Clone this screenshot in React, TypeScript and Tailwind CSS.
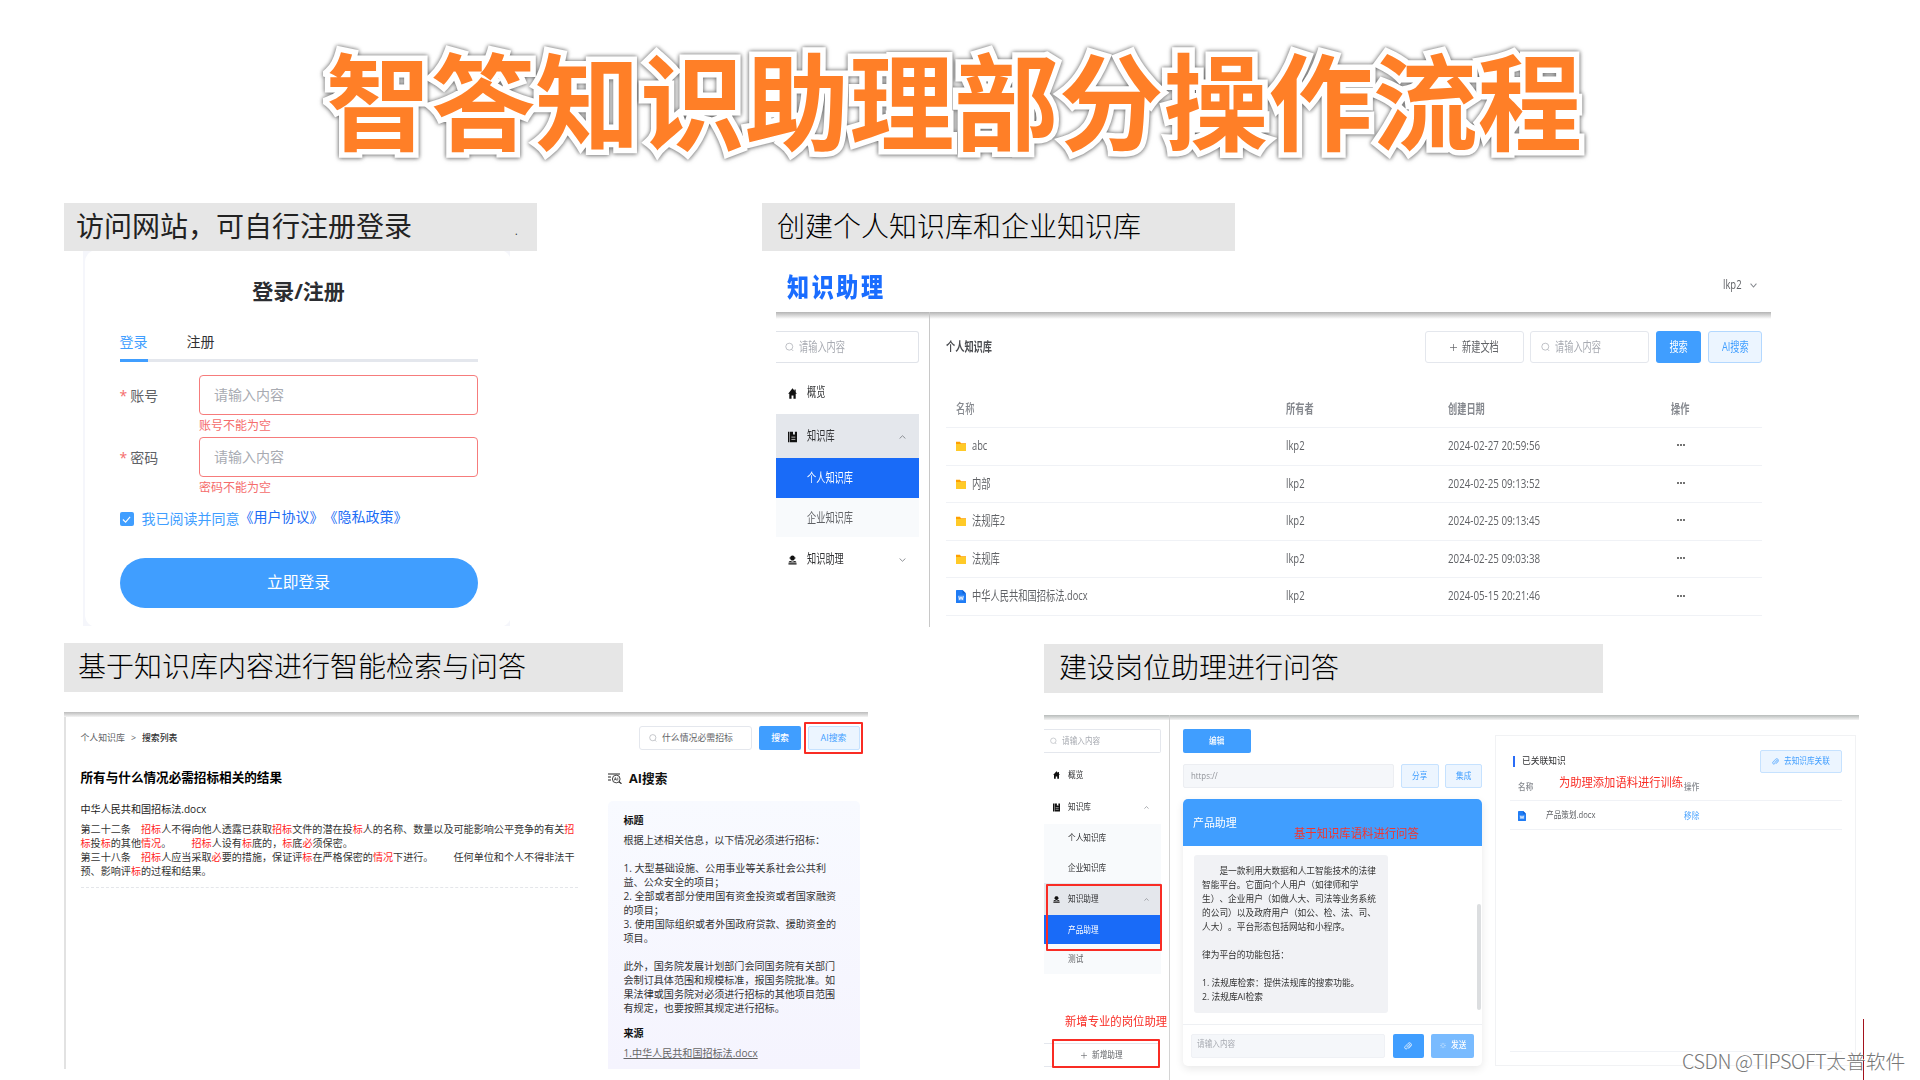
import React from "react";

interface TextProps {
  children: React.ReactNode;
  className?: string;
}

interface FileRow {
  name: string;
  owner: string;
  date: string;
  type: "folder" | "doc";
}

const files: FileRow[] = [
  { name: "abc", owner: "lkp2", date: "2024-02-27 20:59:56", type: "folder" },
  { name: "内部", owner: "lkp2", date: "2024-02-25 09:13:52", type: "folder" },
  { name: "法规库2", owner: "lkp2", date: "2024-02-25 09:13:45", type: "folder" },
  { name: "法规库", owner: "lkp2", date: "2024-02-25 09:03:38", type: "folder" },
  { name: "中华人民共和国招标法.docx", owner: "lkp2", date: "2024-05-15 20:21:46", type: "doc" },
];

// One-line label, usually narrowed with a scale-x class
const T: React.FC<TextProps> = ({ children, className = "" }) => (
  <span className={`inline-block origin-left whitespace-nowrap ${className}`}>{children}</span>
);

const Hl: React.FC<TextProps> = ({ children }) => <span className="text-[#ff2424]">{children}</span>;

const SearchIcon = ({ className = "" }) => (
  <svg viewBox="0 0 16 16" fill="none" stroke="currentColor" strokeWidth="1.3" className={`shrink-0 ${className}`}>
    <circle cx="7.6" cy="7.4" r="6.2" />
    <path d="M11.8 12.2 14.6 15" />
  </svg>
);

const HomeIcon = ({ className = "" }) => (
  <svg viewBox="0 0 16 16" preserveAspectRatio="none" fill="#111" className={`shrink-0 ${className}`}>
    <path d="M8 .5.3 8.2h2V15.500h4v-4.600h3.400v4.600h4V8.200h2l-2-2V2.100h-2.100v1.800z" />
  </svg>
);

const BookIcon = ({ className = "" }) => (
  <svg viewBox="0 0 16 18" preserveAspectRatio="none" className={`shrink-0 ${className}`}>
    <path d="M0 1h2.400v16H0zM3.400 1h5.500v5l1.700-1.400L12.300 6V1H16v16H3.400z" fill="#111" />
    <path d="M6 9.200h7M6 12.600h7" stroke="#fff" strokeWidth="1.100" />
  </svg>
);

const AssistantIcon = ({ className = "" }) => (
  <svg viewBox="0 0 16 18" preserveAspectRatio="none" fill="#111" className={`shrink-0 ${className}`}>
    <path d="M4 4.500C4.300 2 5.800.8 8 .8s3.700 1.200 4 3.700h1.400v1.700H12c-.3 2.300-1.900 3.900-4 3.900S4.300 8.500 4 6.200H2.600V4.500z" />
    <path d="M4 10.600 8 12l4-1.400c1.900.4 2.800 1.300 3 3H1c.2-1.700 1.100-2.600 3-3zM.8 14.700h14.400v2.500H.8z" />
  </svg>
);

const Chevron = ({ up = false, className = "" }) => (
  <svg viewBox="0 0 12 8" preserveAspectRatio="none" fill="none" stroke="#85888e" strokeWidth="1.700" className={`shrink-0 ${className}`}>
    <path d={up ? "M1 7 6 1.500 11 7" : "M1 1 6 6.500 11 1"} />
  </svg>
);

const FolderIcon = () => (
  <svg viewBox="0 0 20 20" preserveAspectRatio="none" className="h-[10px] w-[10px] shrink-0">
    <path d="M0 1.500h8l2 3h10v8H0z" fill="#ffa000" />
    <path d="M0 6h20v14H0z" fill="#ffca28" />
  </svg>
);

const DocIcon = ({ className = "" }) => (
  <svg viewBox="0 0 20 26" preserveAspectRatio="none" className={`shrink-0 ${className}`}>
    <path d="M1 0h12l7 7v18a1 1 0 0 1-1 1H1a1 1 0 0 1-1-1V1a1 1 0 0 1 1-1z" fill="#1f7cf5" />
    <path d="M13 0v7h7z" fill="#0f5fd0" />
    <path d="M4 11h12v10H4z" fill="#fff" fillOpacity=".25" />
    <path d="m5.500 12.500 2 7 2.500-6 2.500 6 2-7" fill="none" stroke="#fff" strokeWidth="1.700" />
  </svg>
);

const ClipIcon = ({ className = "" }) => (
  <svg viewBox="0 0 16 16" fill="none" stroke="currentColor" strokeWidth="1.500" className={`shrink-0 ${className}`}>
    <path d="m5 10.500 5-5.200a1.300 1.300 0 0 1 2 1.800L6.300 13a2.800 2.800 0 0 1-4.200-3.800l6-6.300a3.900 3.900 0 0 1 5.700 5.400l-4.600 5" />
  </svg>
);

const PlusIcon = ({ className = "" }) => (
  <svg viewBox="0 0 10 10" stroke="#606266" strokeWidth="1" className={`shrink-0 ${className}`}>
    <path d="M5 0v10M0 5h10" />
  </svg>
);

const LoaderIcon = ({ className = "" }) => (
  <svg viewBox="0 0 16 16" stroke="currentColor" strokeWidth="1.500" className={`shrink-0 ${className}`}>
    <path d="M8 1v3.500M8 11.500V15M1 8h3.500M11.500 8H15M3 3l2.500 2.500M10.500 10.500 13 13M13 3l-2.500 2.500M5.500 10.500 3 13" />
  </svg>
);

const AiSearchIcon = () => (
  <svg viewBox="0 0 28 22" fill="none" stroke="#222" className="h-[11px] w-[14px] shrink-0">
    <path d="M0 2h24M0 8h6M0 14h6" strokeWidth="2.400" />
    <circle cx="16.500" cy="12" r="7.700" strokeWidth="1.700" />
    <path d="m22 17.500 5 4" strokeWidth="2.200" />
    <path d="m12.500 15 2.300-6 2.300 6M13.500 13h2.800M19.500 9v6" strokeWidth="1.300" />
  </svg>
);

const Login = () => (
  <div className="ml-[19px] h-[375px] w-[427px] overflow-hidden bg-[#f5f6fb]">
    <div className="-mt-px ml-[2px] h-[377px] w-[426px] rounded-[12px] bg-white pl-[34.500px] pt-[30px]">
      <div className="w-[358px]">
        <h2 className="flex h-[24px] items-center justify-center text-[21px] font-bold text-[#2b2d31]">登录/注册</h2>
        <div className="mt-[25px] flex h-[33px] border-b-[3px] border-[#e4e7ed] text-[14px] leading-[26px]">
          <div className="mr-[39px] h-[33px] w-[28px] border-b-[3px] border-[#409eff] text-[#409eff]">登录</div>
          <div className="text-[#303133]">注册</div>
        </div>
        {["账号", "密码"].map((label, i) => (
          <div key={label} className={`flex h-[62px] ${i === 0 ? "mt-[13px]" : ""}`}>
            <div className="flex h-[40px] w-[79.500px] items-center text-[14px] text-[#606266]">
              <span className="mr-[3px] text-[#f56c6c]">*</span>
              {label}
            </div>
            <div className="w-[278.500px]">
              <div className="flex h-[40px] items-center rounded-[4px] border border-[#f67c7c] pb-px pl-[14px] text-[14px] text-[#a8abb2]">
                请输入内容
              </div>
              <div className="flex h-[21px] items-center text-[12px] text-[#f56c6c]">{label}不能为空</div>
            </div>
          </div>
        ))}
        <div className="mt-[12px] flex h-[16px] items-center text-[14px] leading-none">
          <div className="mr-[8px] flex h-[14px] w-[14px] items-center justify-center rounded-[2px] bg-[#409eff]">
            <svg viewBox="0 0 10 10" fill="none" stroke="#fff" strokeWidth="1.200" className="h-[9px] w-[9px]">
              <path d="m1 5 3 3 5-6" />
            </svg>
          </div>
          <span className="text-[#409eff]">我已阅读并同意</span>
          <span className="mb-[4px] text-[#1b6cf5]">《用户协议》《隐私政策》</span>
        </div>
        <button className="mt-[31px] h-[50px] w-full rounded-full bg-[#409eff] text-[15.800px] text-white">立即登录</button>
      </div>
    </div>
  </div>
);

const KnowledgeBase = () => (
  <div className="ml-[14px] w-[995px] text-[12.600px] leading-none text-[#606266]">
    <div className="flex h-[61px] items-center pl-[11px] pt-[11px]">
      <T className="w-[936px] scale-x-[.85] text-[26px] font-black tracking-[3px] text-[#1a6dff]">知识助理</T>
      <T className="w-[27px] scale-x-[.75] pb-[4px]">lkp2</T>
      <Chevron className="mb-[4px] h-[5px] w-[7px]" />
    </div>
    <div className="h-[7px] bg-gradient-to-b from-[#b4b4b4] to-white" />
    <div className="-mt-[7px] flex h-[315px]">
      <div className="w-[154px] border-r border-[#c8c8c8] pt-[19px]">
        <div className="flex h-[32px] w-[143px] items-center rounded-r-[3px] border border-l-0 border-[#e0e3e9] pl-[9px] text-[#a8abb2]">
          <SearchIcon className="mr-[5px] h-[10px] w-[9px]" />
          <T className="scale-x-[.73] pt-px">请输入内容</T>
        </div>
        <div className="flex h-[51px] items-center pl-[12px] pt-[9px] text-[#303133]">
          <HomeIcon className="mr-[10px] h-[11px] w-[9px]" />
          <T className="scale-x-[.73] pb-px">概览</T>
        </div>
        <div className="flex h-[44px] w-[143px] items-center bg-[#e4e7ec] pl-[12px] pt-px text-[#303133]">
          <BookIcon className="mr-[10px] h-[12px] w-[9px]" />
          <T className="w-[92px] scale-x-[.73]">知识库</T>
          <Chevron up className="h-[4px] w-[7px]" />
        </div>
        <div className="flex h-[40px] w-[143px] items-center bg-[#196bf8] pl-[31px] pt-px text-white">
          <T className="scale-x-[.73]">个人知识库</T>
        </div>
        <div className="flex h-[39px] w-[143px] items-center bg-[#f8fafc] pl-[31px] pt-px">
          <T className="scale-x-[.73]">企业知识库</T>
        </div>
        <div className="flex h-[44px] w-[143px] items-center pl-[12px] pt-px text-[#303133]">
          <AssistantIcon className="mr-[10px] h-[10px] w-[9px]" />
          <T className="w-[92px] scale-x-[.73]">知识助理</T>
          <Chevron className="h-[4px] w-[7px]" />
        </div>
      </div>
      <div className="w-[832px] pl-[16px] pt-[19px]">
        <div className="flex h-[32px] items-center">
          <T className="w-[479px] scale-x-[.73] font-bold text-[#4a4c50]">个人知识库</T>
          <div className="mr-[6px] flex h-[32px] w-[99px] shrink-0 items-center rounded-[3px] border border-[#e4e7ed] pl-[24px]">
            <PlusIcon className="mr-[5px] h-[9px] w-[7px]" />
            <T className="scale-x-[.73]">新建文档</T>
          </div>
          <div className="mr-[7px] flex h-[32px] w-[119px] shrink-0 items-center rounded-[3px] border border-[#e4e7ed] pl-[10px] text-[#a8abb2]">
            <SearchIcon className="mr-[5px] h-[10px] w-[9px]" />
            <T className="scale-x-[.73] pt-px">请输入内容</T>
          </div>
          <div className="mr-[7px] flex h-[32px] w-[45px] shrink-0 items-center justify-center rounded-[3px] bg-[#409eff] text-white">
            <T className="!origin-center scale-x-[.73]">搜索</T>
          </div>
          <div className="flex h-[32px] w-[54px] shrink-0 items-center justify-center rounded-[3px] border border-[#b3d8ff] bg-[#ecf5ff] text-[#409eff]">
            <T className="!origin-center scale-x-[.73]">AI搜索</T>
          </div>
        </div>
        <div className="mt-[27px] flex h-[38px] items-center border-b border-[#f0f2f6] pl-[10px] pt-[2px] font-bold text-[#85888e]">
          <T className="w-[330px] scale-x-[.73]">
            <span className="font-medium">名称</span>
          </T>
          <T className="w-[162px] scale-x-[.73]">所有者</T>
          <T className="w-[223px] scale-x-[.73]">创建日期</T>
          <T className="scale-x-[.73]">操作</T>
        </div>
        {files.map((file) => (
          <div key={file.name} className="flex h-[37.600px] items-center border-b border-[#f0f2f6] pl-[10px]">
            <div className="flex w-[330px] shrink-0 items-center">
              {file.type === "folder" ? <FolderIcon /> : <DocIcon className="h-[13px] w-[10px]" />}
              <T className="ml-[6px] scale-x-[.735]">{file.name}</T>
            </div>
            <T className="w-[162px] shrink-0 scale-x-[.75]">{file.owner}</T>
            <T className="w-[229px] shrink-0 scale-x-[.775]">{file.date}</T>
            <div className="flex gap-[1px] pb-[2px]">
              <i className="h-[2px] w-[2px] rounded-full bg-[#444]" />
              <i className="h-[2px] w-[2px] rounded-full bg-[#444]" />
              <i className="h-[2px] w-[2px] rounded-full bg-[#444]" />
            </div>
          </div>
        ))}
      </div>
    </div>
  </div>
);

const SearchResult = () => (
  <div className="mt-[20px] w-[804px] leading-none">
    <div className="h-[5px] bg-gradient-to-b from-[#bcbcbc] to-[#f4f4f4]" />
    <div className="flex h-[352px] border-l-2 border-[#e2e2e2]">
      <div className="w-[512px] pl-[14.500px] pt-[14px]">
        <div className="flex h-[14px] items-center text-[8.900px] text-[#606266]">
          个人知识库
          <span className="mx-[6px]">&gt;</span>
          <span className="font-medium text-[#303133]">搜索列表</span>
        </div>
        <h3 className="mt-[24px] flex h-[18px] items-center text-[12.600px] font-bold text-black">
          所有与什么情况必需招标相关的结果
        </h3>
        <div className="mt-[14px] flex h-[16px] items-center text-[10.080px] text-[#222]">中华人民共和国招标法.docx</div>
        <div className="mt-[5px] w-[497px] whitespace-nowrap border-b border-dashed border-[#e4e6ea] pb-[9px] text-[10.080px] leading-[14px] text-[#333]">
          第二十二条　<Hl>招标</Hl>人不得向他人透露已获取<Hl>招标</Hl>文件的潜在投<Hl>标</Hl>人的名称、数量以及可能影响公平竞争的有关<Hl>招</Hl>
          <br />
          <Hl>标</Hl>投<Hl>标</Hl>的其他<Hl>情况</Hl>。　　<Hl>招标</Hl>人设有<Hl>标</Hl>底的，<Hl>标</Hl>底<Hl>必</Hl>须保密。
          <br />
          第三十八条　<Hl>招标</Hl>人应当采取<Hl>必</Hl>要的措施，保证评<Hl>标</Hl>在严格保密的<Hl>情况</Hl>下进行。　　任何单位和个人不得非法干
          <br />
          预、影响评<Hl>标</Hl>的过程和结果。
        </div>
      </div>
      <div className="w-[290px] pl-[61px] pt-[5px]">
        <div className="flex h-[32px] items-center text-[8.900px]">
          <div className="mr-[7px] flex h-[24px] w-[113px] shrink-0 items-center rounded-[3px] border border-[#e4e7ed] pl-[9px] text-[#606266]">
            <SearchIcon className="mr-[5px] h-[8px] w-[8px] text-[#a8abb2]" />
            什么情况必需招标
          </div>
          <div className="mr-[3px] flex h-[24px] w-[42px] shrink-0 items-center justify-center rounded-[2px] bg-[#409eff] font-medium text-white">
            搜索
          </div>
          <div className="flex h-[32px] w-[59px] shrink-0 items-center justify-center rounded-[1px] border-2 border-[#f92c24]">
            <div className="flex h-[24px] w-[52px] items-center justify-center rounded-[2px] border border-[#c6e2ff] bg-[#ecf5ff] text-[#409eff]">
              AI搜索
            </div>
          </div>
        </div>
        <div className="-ml-[31px] mt-[15px] flex h-[18px] items-center text-[12.700px] font-bold text-[#111]">
          <AiSearchIcon />
          <span className="ml-[7px]">AI搜索</span>
        </div>
        <div className="-ml-[31px] mt-[14px] h-[268px] w-[252px] whitespace-nowrap rounded-t-[5px] bg-gradient-to-b from-[#f8faff] to-[#f5f4fe] pl-[15.500px] pt-[12px] text-[10.080px] leading-[14px] text-[#333]">
          <div className="font-bold text-[#111]">标题</div>
          <div className="mt-[6px]">
            根据上述相关信息，以下情况必须进行招标：
            <br />
            <br />
            1. 大型基础设施、公用事业等关系社会公共利
            <br />
            益、公众安全的项目；
            <br />
            2. 全部或者部分使用国有资金投资或者国家融资
            <br />
            的项目；
            <br />
            3. 使用国际组织或者外国政府贷款、援助资金的
            <br />
            项目。
            <br />
            <br />
            此外，国务院发展计划部门会同国务院有关部门
            <br />
            会制订具体范围和规模标准，报国务院批准。如
            <br />
            果法律或国务院对必须进行招标的其他项目范围
            <br />
            有规定，也要按照其规定进行招标。
          </div>
          <div className="mt-[11px] font-bold text-[#111]">来源</div>
          <div className="mt-[6px] text-[#666] underline">1.中华人民共和国招标法.docx</div>
        </div>
      </div>
    </div>
  </div>
);

const AssistantSidebar = () => (
  <div className="relative w-[126px] shrink-0 border-r-[1.500px] border-[#d4d4d4] pt-[14px] text-[#303133]">
    <div className="flex h-[24px] w-[117px] items-center rounded-r-[2px] border border-l-0 border-[#e4e7ed] pl-[6px] text-[#a8abb2]">
      <SearchIcon className="mr-[5px] h-[8px] w-[7px]" />
      <T className="scale-x-[.88]">请输入内容</T>
    </div>
    <div className="flex h-[44px] items-center pl-[9px]">
      <HomeIcon className="mr-[8px] h-[8px] w-[7px]" />
      <T className="scale-x-[.88]">概览</T>
    </div>
    <div className="flex h-[27px] items-center pb-[6px] pl-[9px]">
      <BookIcon className="mr-[8px] h-[9px] w-[7px]" />
      <T className="w-[76px] scale-x-[.88]">知识库</T>
      <Chevron up className="h-[3px] w-[5px]" />
    </div>
    <div className="h-[59px] w-[117px] bg-[#f8fafc] pl-[24px]">
      <div className="flex h-[29.500px] items-center">
        <T className="scale-x-[.88]">个人知识库</T>
      </div>
      <div className="flex h-[29.500px] items-center">
        <T className="scale-x-[.88]">企业知识库</T>
      </div>
    </div>
    <div className="flex h-[32px] w-[117px] items-center bg-[#e4e7ec] pl-[9px]">
      <AssistantIcon className="mr-[8px] h-[7px] w-[7px]" />
      <T className="w-[76px] scale-x-[.88]">知识助理</T>
      <Chevron up className="h-[3px] w-[5px]" />
    </div>
    <div className="flex h-[29px] w-[117px] items-center bg-[#196bf8] pl-[24px] pt-px text-white">
      <T className="scale-x-[.88]">产品助理</T>
    </div>
    <div className="flex h-[30px] w-[117px] items-center bg-[#f8fafc] pl-[24px] text-[#606266]">
      <T className="scale-x-[.88]">测试</T>
    </div>
    <div className="mt-[69px] flex h-[24px] w-[116px] items-center border-y border-[#e4e7ed] pl-[37px] text-[#606266]">
      <PlusIcon className="mr-[5px] h-[7px] w-[6px]" />
      <T className="scale-x-[.88]">新增助理</T>
    </div>
    {/* red callouts over the menu */}
    <div className="absolute left-[2px] top-[169px] h-[67px] w-[116px] rounded-[1px] border-2 border-[#f92c24]" />
    <T className="absolute left-[21px] top-[300px] scale-x-[.945] text-[12px] leading-[14px] text-[#f92c24]">
      新增专业的岗位助理
    </T>
    <div className="absolute left-[8px] top-[324px] h-[29px] w-[108px] rounded-[1px] border-2 border-[#f92c24]" />
  </div>
);

const Assistant = () => (
  <div className="mt-[22px] w-[815px] text-[8.700px] leading-none text-[#606266]">
    <div className="h-[5px] bg-gradient-to-b from-[#b8bcbb] to-[#f4f4f4]" />
    <div className="-mt-[5px] flex h-[365px]">
      <AssistantSidebar />
      <div className="ml-[13px] w-[299px] shrink-0 pt-[14px]">
        <div className="flex h-[24px] w-[68px] items-center justify-center rounded-[2px] bg-[#409eff] font-medium text-white">
          <T className="!origin-center scale-x-[.88]">编辑</T>
        </div>
        <div className="mt-[11px] flex h-[24px] items-center">
          <div className="mr-[7px] flex h-[24px] w-[211px] items-center rounded-[2px] border border-[#eceef2] bg-[#f5f7fa] pl-[7px] text-[#8f9298]">
            <T className="scale-x-[.9]">https://</T>
          </div>
          <div className="mr-[6px] flex h-[24px] w-[38px] items-center justify-center rounded-[2px] border border-[#c6e2ff] bg-[#ecf5ff] text-[#409eff]">
            <T className="!origin-center scale-x-[.88]">分享</T>
          </div>
          <div className="flex h-[24px] w-[37px] items-center justify-center rounded-[2px] border border-[#c6e2ff] bg-[#ecf5ff] text-[#409eff]">
            <T className="!origin-center scale-x-[.88]">集成</T>
          </div>
        </div>
        <div className="mt-[11px] h-[267px] rounded-[5px] bg-white shadow-[0_3px_8px_rgba(0,0,0,0.09)]">
          <div className="relative flex h-[47px] items-center rounded-t-[5px] bg-[#409eff] pl-[10px] text-[11.500px] text-white">
            <T className="scale-x-[.95]">产品助理</T>
            <T className="absolute left-[111px] top-[28px] scale-x-[.945] text-[12px] leading-[14px] text-[#f4352e]">
              基于知识库语料进行问答
            </T>
          </div>
          <div className="flex h-[179px] border-b border-[#eef0f3] pl-[11px] pt-[9px]">
            <div className="h-[158px] w-[194px] rounded-[3px] bg-[#f1f2f5] pl-[8px] pt-[9px] text-[#333]">
              <T className="scale-x-[.935] text-[9.300px] leading-[14px]">
                {"　　"}是一款利用大数据和人工智能技术的法律
                <br />
                智能平台。它面向个人用户（如律师和学
                <br />
                生）、企业用户（如做人大、司法等业务系统
                <br />
                的公司）以及政府用户（如公、检、法、司、
                <br />
                人大）。平台形态包括网站和小程序。
                <br />
                <br />
                律为平台的功能包括：
                <br />
                <br />
                1. 法规库检索：提供法规库的搜索功能。
                <br />
                2. 法规库AI检索
              </T>
            </div>
            <div className="ml-[89px] mt-[49px] h-[106px] w-[4px] shrink-0 rounded-full bg-[#dcdee0]" />
          </div>
          <div className="flex h-[41px] items-center pl-[7.500px]">
            <div className="mr-[8px] h-[24px] w-[194px] rounded-[2px] border border-[#eff1f5] bg-[#f5f7fa] pl-[5px] pt-[5px] text-[#a8abb2]">
              <T className="scale-x-[.88]">请输入内容</T>
            </div>
            <div className="mr-[7px] flex h-[24px] w-[31px] items-center justify-center rounded-[2px] bg-[#409eff] text-white">
              <ClipIcon className="h-[8px] w-[8px]" />
            </div>
            <div className="flex h-[24px] w-[43.500px] items-center rounded-[2px] bg-[#79bbff] pl-[9px] text-white">
              <LoaderIcon className="mr-[5px] h-[7px] w-[6px]" />
              <T className="scale-x-[.88] font-medium">发送</T>
            </div>
          </div>
        </div>
      </div>
      <div className="relative ml-[13px] mt-[20px] h-[331px] w-[361px] shrink-0 border border-[#f1f2f4] pl-[14px] pt-[13px]">
        <div className="flex h-[24px] w-[332px] items-center pl-[3px]">
          <div className="mr-[7px] h-[11px] w-[2px] bg-[#2a6cf6]" />
          <T className="w-[238px] scale-x-[.94] text-[9.300px] text-[#303133]">已关联知识</T>
          <div className="flex h-[23px] w-[82px] shrink-0 items-center rounded-[2px] border border-[#c6e2ff] bg-[#ecf5ff] pl-[11px] text-[#409eff]">
            <ClipIcon className="mr-[5px] h-[7px] w-[7px]" />
            <T className="scale-x-[.88] pt-px">去知识库关联</T>
          </div>
        </div>
        <div className="flex h-[28px] w-[332px] items-center border-b border-[#f0f2f6] pl-[8px] pt-[2px] font-medium text-[#85888e]">
          <T className="w-[166px] scale-x-[.88]">名称</T>
          <T className="scale-x-[.88]">操作</T>
        </div>
        <div className="flex h-[29px] w-[332px] items-center border-b border-[#f0f2f6] pl-[8px] pt-px">
          <DocIcon className="mr-[20px] h-[10px] w-[8px]" />
          <T className="w-[138px] scale-x-[.88]">产品策划.docx</T>
          <T className="scale-x-[.88] pt-px text-[#409eff]">移除</T>
        </div>
        <div className="mt-[221px] h-px w-[332px] bg-[#f0f2f6]" />
        <T className="absolute left-[63px] top-[40px] scale-x-[.94] text-[12px] leading-[14px] text-[#f92c24]">
          为助理添加语料进行训练
        </T>
      </div>
    </div>
  </div>
);

const App: React.FC = () => {
  return (
    <main className="relative h-[1080px] w-[1920px] overflow-hidden bg-white font-['Open_Sans','Noto_Sans_CJK_SC',sans-serif] [text-spacing-trim:space-all]">
      <h1 className="h-[203px] whitespace-nowrap pl-[326px] pt-[22px] font-['Noto_Sans_CJK_SC',sans-serif] text-[104.700px] font-bold leading-[150px] text-[#ff7f27] [-webkit-text-stroke:11px_white] [filter:drop-shadow(0_0_2px_rgba(0,0,0,0.55))_drop-shadow(0_1px_2px_rgba(0,0,0,0.2))] [paint-order:stroke_fill] [stroke-linejoin:round]">
        智答知识助理部分操作流程
      </h1>
      <div className="flex h-[440px] pl-[64px]">
        <section className="w-[698px]">
          <h2 className="flex h-[48px] w-[473px] items-center bg-[#e6e6e6] pb-[3px] pl-[12px] text-[28px] leading-none text-[#222]">
            访问网站，可自行注册登录
            <span className="ml-[103px] mt-[10px] text-[10px]">.</span>
          </h2>
          <Login />
        </section>
        <section>
          <h2 className="flex h-[48px] w-[473px] items-center bg-[#e6e6e6] pb-[3px] pl-[15px] text-[28px] font-light leading-none text-black">
            创建个人知识库和企业知识库
          </h2>
          <KnowledgeBase />
        </section>
      </div>
      <div className="flex h-[437px] pl-[64px]">
        <section className="w-[980px]">
          <h2 className="flex h-[49px] w-[559px] items-center bg-[#e6e6e6] pb-[3px] pl-[14px] text-[28px] font-light leading-none text-black">
            基于知识库内容进行智能检索与问答
          </h2>
          <SearchResult />
        </section>
        <section className="pt-px">
          <h2 className="flex h-[49px] w-[559px] items-center bg-[#e6e6e6] pb-[3px] pl-[15px] text-[28px] font-light leading-none text-black">
            建设岗位助理进行问答
          </h2>
          <Assistant />
        </section>
      </div>
      <div className="absolute bottom-0 left-[1863px] h-[61px] w-px bg-[#a3121c]" />
      <div className="absolute left-[1682px] top-[1046px] whitespace-nowrap font-['Noto_Sans_CJK_SC',sans-serif] text-[19.800px] font-light leading-[30px] text-[#777] [text-shadow:-1px_-1px_0_#fff]">
        <span className="tracking-[-.43px]">CSDN @TIPSOFT</span>太普软件
      </div>
    </main>
  );
};

export default App;
